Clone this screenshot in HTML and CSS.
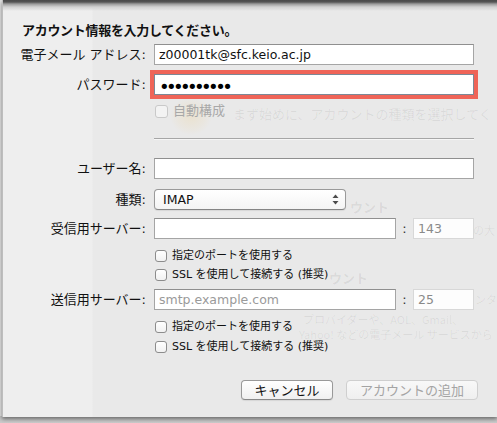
FILE: index.html
```html
<!DOCTYPE html>
<html lang="ja">
<head>
<meta charset="utf-8">
<title>アカウント情報</title>
<link rel="stylesheet" href="styles.css">
</head>
<body>
<div class="sheet">
  <div class="ghost" aria-hidden="true">
    <div class="g-glow"></div>
    <div class="g g1">まず始めに、アカウントの種類を選択してく</div>
    <div class="g g2">ウント</div>
    <div class="g g3">の大</div>
    <div class="g g4">ウント</div>
    <div class="g g5">ンタ</div>
    <div class="g g6">プロバイダーや、AOL、Gmail、</div>
    <div class="g g7">Yahoo! などの電子メール サービスから</div>
  </div>

  <div class="form">
    <div class="title">アカウント情報を入力してください。</div>

    <div class="row r-email">
      <div class="lbl">電子メール アドレス:</div>
      <div class="input"><span class="val">z00001tk@sfc.keio.ac.jp</span></div>
    </div>

    <div class="row r-pass">
      <div class="lbl">パスワード:</div>
      <div class="input focus"><span class="dots">••••••••••</span></div>
    </div>

    <div class="row r-auto">
      <div></div>
      <div class="check big disabled"><span class="box"></span><span class="ctext">自動構成</span></div>
    </div>

    <div class="row r-sep">
      <div></div>
      <div class="sep"></div>
    </div>

    <div class="row r-user">
      <div class="lbl">ユーザー名:</div>
      <div class="input"></div>
    </div>

    <div class="row r-type">
      <div class="lbl">種類:</div>
      <div class="popup">
        <span class="val">IMAP</span>
        <svg class="arrows" width="7" height="11" viewBox="0 0 7 11"><path d="M3.5 0.5 L6.5 4 L0.5 4 Z" fill="#4a4a4a"/><path d="M0.5 7 L6.5 7 L3.5 10.5 Z" fill="#4a4a4a"/></svg>
      </div>
    </div>

    <div class="row r-in">
      <div class="lbl">受信用サーバー:</div>
      <div class="server">
        <div class="input srv"></div>
        <span class="colon">:</span>
        <div class="input port"><span class="val">143</span></div>
      </div>
    </div>

    <div class="row r-c1">
      <div></div>
      <div class="check"><span class="box"></span><span class="ctext">指定のポートを使用する</span></div>
    </div>
    <div class="row r-c2">
      <div></div>
      <div class="check"><span class="box"></span><span class="ctext">SSL を使用して接続する (推奨)</span></div>
    </div>

    <div class="row r-out">
      <div class="lbl">送信用サーバー:</div>
      <div class="server">
        <div class="input srv"><span class="val ph">smtp.example.com</span></div>
        <span class="colon">:</span>
        <div class="input port"><span class="val">25</span></div>
      </div>
    </div>

    <div class="row r-c3">
      <div></div>
      <div class="check"><span class="box"></span><span class="ctext">指定のポートを使用する</span></div>
    </div>
    <div class="row r-c4">
      <div></div>
      <div class="check"><span class="box"></span><span class="ctext">SSL を使用して接続する (推奨)</span></div>
    </div>

    <div class="buttons">
      <div class="btn cancel">キャンセル</div>
      <div class="btn add disabled">アカウントの追加</div>
    </div>
  </div>
</div>
</body>
</html>
```

FILE: styles.css
```css
html, body {
  margin: 0;
  padding: 0;
}

body {
  width: 497px;
  height: 423px;
  overflow: hidden;
  background: linear-gradient(#e2e2e2 0, #e2e2e2 416px, #c2c2c2 416px, #cbcbcb 423px);
  font-family: "DejaVu Sans", "Noto Sans CJK JP", sans-serif;
  color: #111;
}

.sheet {
  position: relative;
  margin-left: 2px;
  height: 417px;
  border-left: 1px solid #bdbdbd;
  background:
    linear-gradient(#4a4a4a 0, #555 2px, #9c9c9c 4px, #d2d2d2 7px, rgba(233, 233, 233, 0) 11px),
    linear-gradient(to right, #eeeeee 0, #eeeeee 89px, #e9e9e9 90px);
  box-shadow: 0 2px 4px rgba(0, 0, 0, 0.45);
  overflow: hidden;
}

/* faint content of the window behind the sheet */
.ghost {
  position: absolute;
  inset: 0;
  z-index: 0;
  font-family: "Noto Sans CJK JP", sans-serif;
}

.g {
  position: absolute;
  white-space: nowrap;
  color: rgba(0, 0, 0, 0.07);
  font-size: 13px;
  line-height: 16px;
}

.g-glow {
  position: absolute;
  left: 167px;
  top: 97px;
  width: 42px;
  height: 38px;
  border-radius: 50%;
  background: radial-gradient(closest-side, rgba(238, 200, 120, 0.22), rgba(238, 200, 120, 0.08) 70%, rgba(238, 200, 120, 0));
}

.g1 { left: 230px; top: 106px; }
.g2 { left: 347px; top: 199px; font-weight: 700; }
.g3 { left: 470px; top: 222px; font-size: 11px; }
.g4 { left: 326px; top: 270px; font-weight: 700; }
.g5 { left: 472px; top: 291px; font-size: 11px; }
.g6 { left: 300px; top: 311px; font-size: 11px; }
.g7 { left: 296px; top: 326px; font-size: 11px; }

.form {
  position: relative;
  z-index: 1;
  padding-top: 22px;
  font-size: 13px;
}

.title {
  padding-left: 19px;
  font-family: "Noto Sans CJK JP", sans-serif;
  font-weight: 700;
  font-size: 13px;
  line-height: 16px;
  letter-spacing: -0.3px;
}

.row {
  display: grid;
  grid-template-columns: 143px 320px;
  column-gap: 8px;
  align-items: center;
}

.lbl {
  text-align: right;
  white-space: nowrap;
  font-size: 13px;
  line-height: 16px;
}

.r-email { margin-top: 6px; }
.r-pass { margin-top: 9px; }
.r-auto { margin-top: 8px; }
.r-sep { margin-top: 19px; }
.r-user { margin-top: 19px; }
.r-type { margin-top: 10px; }
.r-in { margin-top: 8px; }
.r-c1 { margin-top: 10px; }
.r-c2 { margin-top: 6px; }
.r-out { margin-top: 8px; }
.r-c3 { margin-top: 10px; }
.r-c4 { margin-top: 7px; }

.input {
  box-sizing: border-box;
  height: 21px;
  border: 1px solid #a5a5a5;
  border-top-color: #8f8f8f;
  background: #fff;
  padding-left: 4px;
  display: flex;
  align-items: center;
  overflow: hidden;
}

.input .val {
  font-size: 12.5px;
  line-height: 16px;
  white-space: nowrap;
}

.input.focus {
  border-color: #7c8896;
  outline: 4px solid #ef6458;
  outline-offset: 0;
}

.dots {
  font-size: 18px;
  line-height: 16px;
  letter-spacing: -3.6px;
  color: #000;
  margin-top: 4px;
}

.sep {
  height: 1px;
  background: #a6a6a6;
  box-shadow: 0 1px 0 rgba(255, 255, 255, 0.6);
}

.check {
  display: flex;
  align-items: center;
  margin-left: 1px;
  font-size: 11px;
  line-height: 13px;
}

.check .box {
  box-sizing: border-box;
  width: 12px;
  height: 12px;
  border: 1px solid #8c8c8c;
  border-radius: 3px;
  background: linear-gradient(#ffffff, #f1f1f1);
  margin-right: 5px;
  flex: none;
}

.check .ctext {
  white-space: nowrap;
}

.check.big {
  font-size: 13px;
  line-height: 16px;
}

.check.big .box {
  width: 13px;
  height: 13px;
  margin-right: 5px;
}

.check.disabled .box {
  border-color: #c9c9c9;
  background: #f3f3f3;
}

.check.disabled .ctext {
  color: #a8a8a8;
}

.popup {
  box-sizing: border-box;
  width: 192px;
  height: 21px;
  border: 1px solid #9a9a9a;
  border-bottom-color: #858585;
  border-radius: 4px;
  background: linear-gradient(#ffffff, #f4f4f4);
  box-shadow: 0 1px 1px rgba(0, 0, 0, 0.08);
  display: flex;
  align-items: center;
  justify-content: space-between;
  padding: 0 6px 0 8px;
}

.popup .val {
  font-size: 12.5px;
  line-height: 16px;
}

.arrows {
  display: block;
}

.server {
  display: flex;
  align-items: center;
}

.input.srv {
  width: 242px;
  flex: none;
}

.colon {
  width: 17px;
  text-align: center;
  font-size: 13px;
  line-height: 16px;
  color: #333;
}

.input.port {
  width: 61px;
  flex: none;
  border-color: #d8d8d8;
  background: #fdfdfd;
}

.input.port .val {
  color: #8a8a8a;
}

.val.ph {
  color: #9a9a9a;
}

.buttons {
  display: flex;
  justify-content: flex-end;
  gap: 13px;
  margin-top: 27px;
  padding-right: 19px;
}

.btn {
  box-sizing: border-box;
  height: 20px;
  border: 1px solid #999;
  border-bottom-color: #888;
  border-radius: 4px;
  background: linear-gradient(#ffffff, #f0f0f0);
  box-shadow: 0 1px 1px rgba(0, 0, 0, 0.08);
  font-family: "Noto Sans CJK JP", sans-serif;
  font-size: 13px;
  line-height: 18px;
  text-align: center;
  white-space: nowrap;
}

.btn.cancel {
  width: 92px;
}

.btn.add {
  width: 132px;
}

.btn.disabled {
  border-color: #cfcfcf;
  color: #a4a4a4;
  background: linear-gradient(#f8f8f8, #efefef);
  box-shadow: none;
}
```
